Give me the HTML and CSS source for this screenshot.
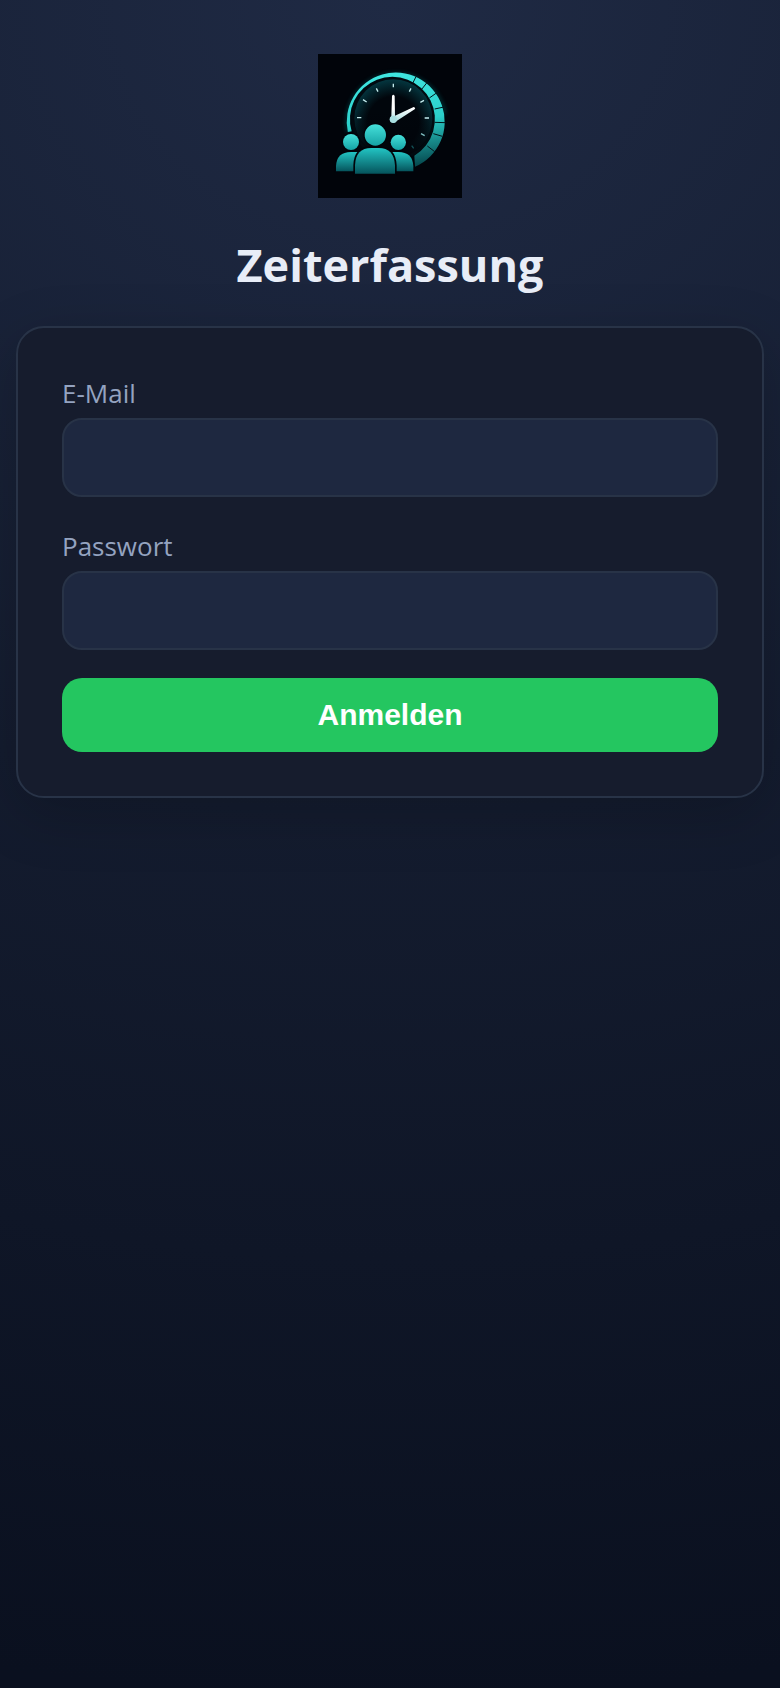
FILE: index.html
```html
<!DOCTYPE html>
<html lang="de">
<head>
    <meta charset="UTF-8">
    <meta name="viewport" content="width=device-width, initial-scale=1.0">
    <title>Zeiterfassung</title>
    <link rel="stylesheet" href="styles.css">
</head>
<body>
    <main class="login">
        <svg class="logo" viewBox="0 0 432 432" role="img" aria-label="Logo">
            <defs>
                <radialGradient id="face" cx="50%" cy="55%" r="55%">
                    <stop offset="0.6" stop-color="#01060c"/>
                    <stop offset="1" stop-color="#04363f"/>
                </radialGradient>
                <linearGradient id="faceFade" x1="0" y1="0" x2="0" y2="1">
                    <stop offset="0.4" stop-color="#01040a" stop-opacity="0"/>
                    <stop offset="0.95" stop-color="#01040a"/>
                </linearGradient>
                <linearGradient id="ring" gradientUnits="userSpaceOnUse" x1="260" y1="56" x2="300" y2="340">
                    <stop offset="0" stop-color="#3fe6e0"/>
                    <stop offset="0.5" stop-color="#2bcfca"/>
                    <stop offset="1" stop-color="#04444a"/>
                </linearGradient>
                <linearGradient id="head" x1="0" y1="0" x2="0" y2="1">
                    <stop offset="0" stop-color="#45e0da"/>
                    <stop offset="1" stop-color="#15a3a5"/>
                </linearGradient>
                <linearGradient id="body" x1="0" y1="0" x2="0" y2="1">
                    <stop offset="0" stop-color="#22c4c3"/>
                    <stop offset="1" stop-color="#05545c"/>
                </linearGradient>
                <linearGradient id="hand" x1="0" y1="0" x2="0" y2="1">
                    <stop offset="0.5" stop-color="#ffffff"/>
                    <stop offset="1" stop-color="#9fdcde"/>
                </linearGradient>
                <filter id="glow" x="-20%" y="-20%" width="140%" height="140%">
                    <feGaussianBlur stdDeviation="6"/>
                </filter>
            </defs>
            <rect width="432" height="432" fill="#01040a"/>

            <!-- clock -->
            <path d="M89.5 234A147 147 0 0 1 380 180" fill="none" stroke="#0a8f92" stroke-width="6" opacity="0.5" filter="url(#glow)"/>
            <circle cx="226" cy="193" r="127" fill="#010a10"/>
            <circle cx="226" cy="193" r="117" fill="url(#face)"/>
            <circle cx="226" cy="193" r="119" fill="url(#faceFade)"/>
            <path d="M89.5 234A147 147 0 1 1 291 338L289 305A127.5 127.5 0 1 0 101 232Z" fill="url(#ring)"/>
            <g stroke="#01141a" stroke-width="3">
                <path d="M294 68L284 88M326 87L311 106M354 118L334 132M378 159L350 165M382 206L350 205M373 247L346 239M350 293L328 276"/>
            </g>
            <g stroke="#c4ecee" stroke-width="4">
                <path d="M226 89v11M279 103l-5 10M318 139l-11 6M333 192h-13M130 191h-13M146 144l-11-7M180 113l-5-10"/>
                <path d="M320 245l-11-6" stroke="#7fbfc2"/>
                <path d="M287 283l-6-8" stroke="#135258"/>
            </g>
            <path d="M222 126Q226 118 230 126L231 185L287 159Q294 161 290 166L237 200Q229 210 219 204Q212 196 220 187Z" fill="url(#hand)"/>
            <circle cx="226" cy="196" r="11" fill="#a8dfe1"/>

            <!-- people -->
            <g stroke="#01040a" stroke-width="7" paint-order="stroke">
                <circle cx="99" cy="264" r="24" fill="url(#head)"/>
                <circle cx="241" cy="265" r="23" fill="url(#head)"/>
                <path d="M54 352V337Q56 294 99 294H140V352Z" fill="url(#body)"/>
                <path d="M286 352V337Q284 294 241 294H200V352Z" fill="url(#body)"/>
                <path d="M111 359V334Q113 282 160 282H182Q228 282 231 334V359Z" fill="url(#body)" stroke-width="10"/>
                <circle cx="172" cy="243" r="32" fill="url(#head)"/>
            </g>
        </svg>

        <h1 class="title">Zeiterfassung</h1>

        <form class="card">
            <div class="form-group">
                <label for="email">E-Mail</label>
                <input type="email" id="email" name="email" autocomplete="username">
            </div>
            <div class="form-group">
                <label for="password">Passwort</label>
                <input type="password" id="password" name="password" autocomplete="current-password">
            </div>
            <button type="submit" class="submit-button">Anmelden</button>
        </form>
    </main>
</body>
</html>
```

FILE: styles.css
```css
* {
    margin: 0;
    padding: 0;
    box-sizing: border-box;
}

body {
    min-height: 100vh;
    font-family: 'Segoe UI', 'Open Sans', 'Noto Sans', sans-serif;
    background: radial-gradient(2000px 1700px at top, #1f2a44 0%, #141c2f 48%, #0a101f 100%);
    color: #e8edf7;
}

.login {
    display: flex;
    flex-direction: column;
    align-items: center;
    padding: 54px 16px;
}

.logo {
    width: 144px;
    height: 144px;
}

.title {
    margin: 35px 0 29px;
    font-size: 45px;
    line-height: 64px;
    font-weight: 700;
}

.card {
    width: 100%;
    padding: 44px;
    background: #161c2d;
    border: 2px solid #283347;
    border-radius: 28px;
    box-shadow: 0 16px 60px rgba(0, 0, 0, 0.2);
}

.form-group {
    margin-bottom: 28px;
}

label {
    display: block;
    margin-bottom: 4px;
    font-size: 26px;
    line-height: 42px;
    color: #94a3c0;
}

input {
    display: block;
    width: 100%;
    height: 79px;
    padding: 20px 24px;
    background: #1e2840;
    border: 2px solid #283347;
    border-radius: 20px;
    color: #e8edf7;
    font-family: inherit;
    font-size: 30px;
}

input:focus {
    outline: none;
    border-color: #22c55e;
}

.submit-button {
    display: block;
    width: 100%;
    padding: 20px;
    background: #24c660;
    border: none;
    border-radius: 20px;
    color: #fff;
    font-family: 'Liberation Sans', Arial, sans-serif;
    font-size: 30px;
    line-height: 34px;
    font-weight: 700;
    cursor: pointer;
}

.submit-button:hover {
    background: #1eae53;
}
```
